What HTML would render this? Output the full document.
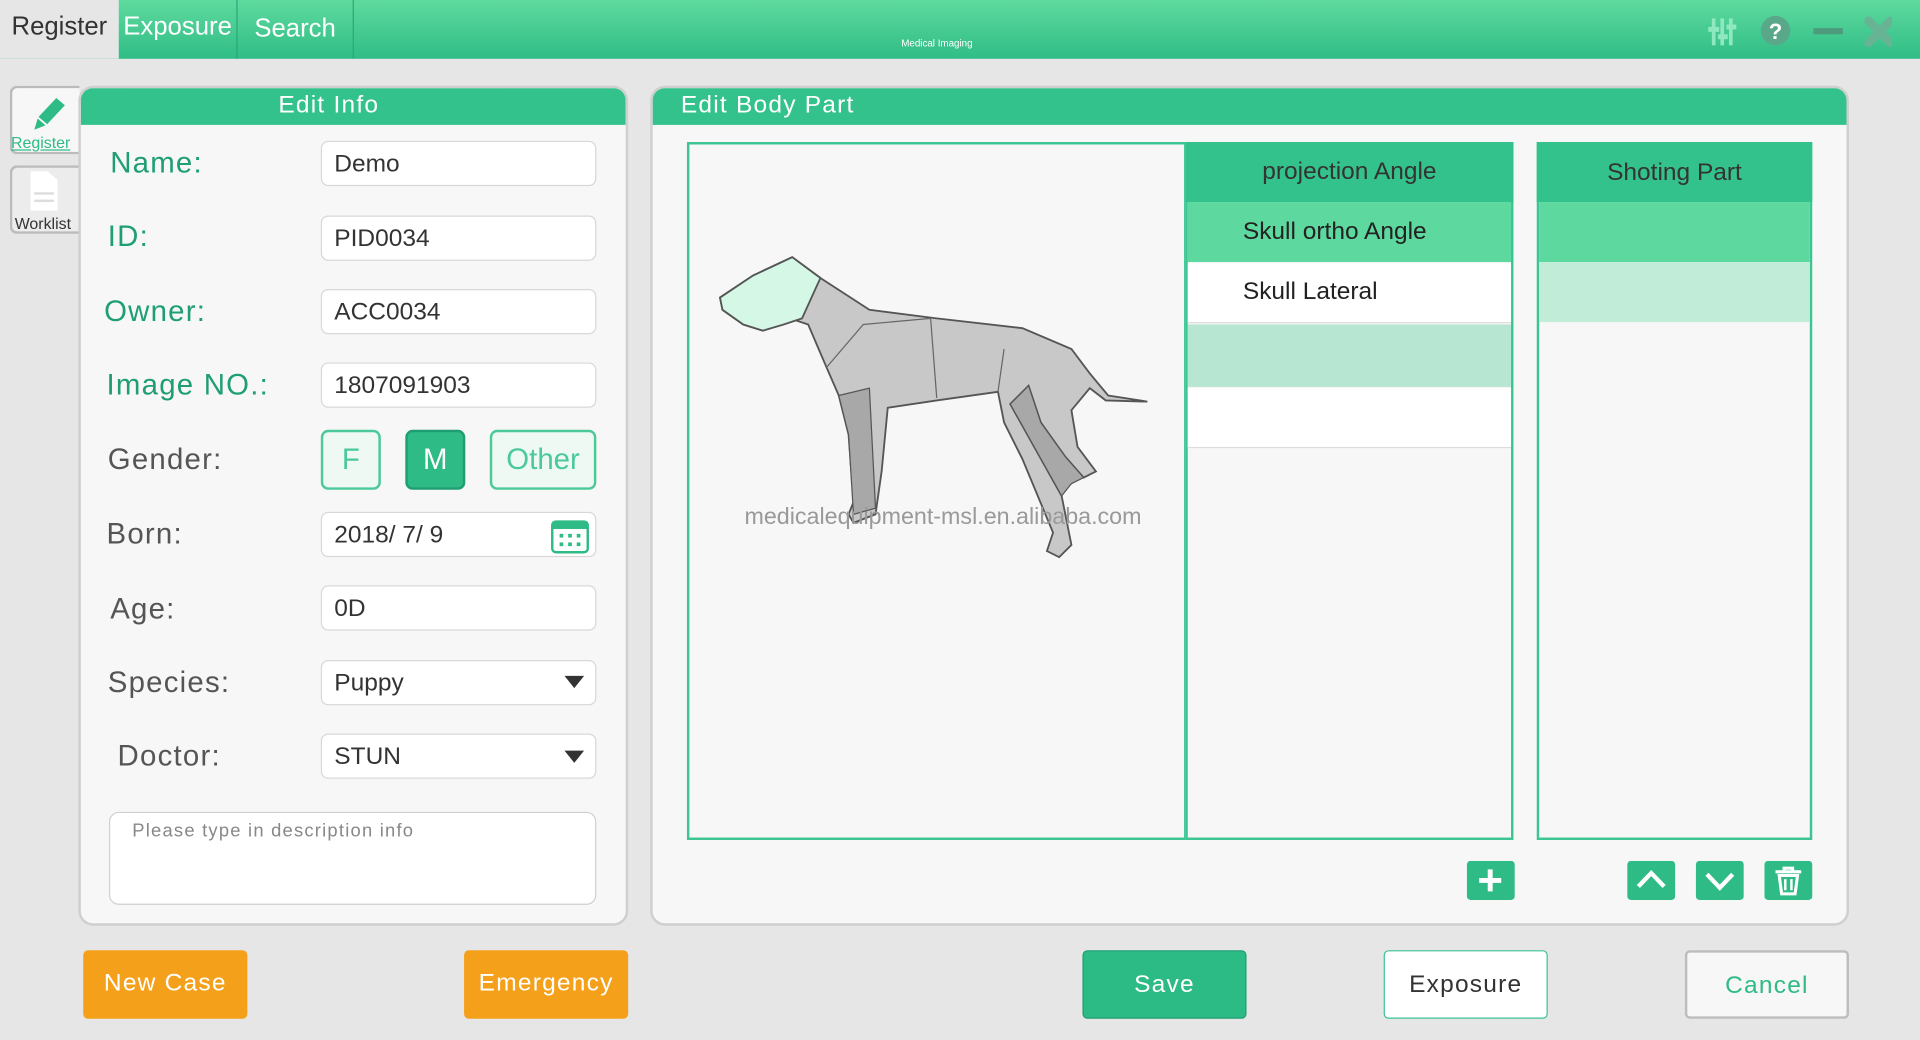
<!DOCTYPE html>
<html><head><meta charset="utf-8"><style>
*{margin:0;padding:0;box-sizing:border-box}
html,body{width:1920px;height:1040px;overflow:hidden;background:#e6e6e6}
#w{position:absolute;left:0;top:0;width:1568px;height:849px;transform:scale(1.22449);transform-origin:0 0;font-family:"Liberation Sans",sans-serif;background:#e6e6e6}
.a{position:absolute}
.top{left:0;top:0;width:1568px;height:48px;background:linear-gradient(#5fda9e,#2fbd86)}
.tab{top:0;height:48px;font-size:21px;color:#fff;padding-top:12px;text-align:center}
.panel{background:#f7f7f7;border:2px solid #cfcfcf;border-radius:12px;overflow:hidden}
.ph{position:absolute;left:0;top:0;right:0;height:30px;background:#34c28c;color:#fff;font-size:20px;padding-top:3px}
.lab{font-size:24px;letter-spacing:1px}
.g{color:#1f9e73}.k{color:#555}
.in{left:262px;width:225px;height:37px;background:#fff;border:1px solid #d8d8d8;border-radius:6px;font-size:20px;color:#333;padding:7px 10px}
.btn{height:56px;border-radius:4px;font-size:20px;text-align:center;line-height:54px;letter-spacing:1px}
</style></head><body><div id="w">
<div class="a top"></div>
<div class="a" style="left:0;top:0;width:97px;height:48px;background:#e6e6e6"></div>
<div class="a tab" style="left:0;width:97px;color:#333;padding-top:10px">Register</div>
<div class="a tab" style="left:97px;width:97px;border-right:1px solid #2aa877;padding-top:10px">Exposure</div>
<div class="a tab" style="left:194px;width:95px;border-right:1px solid #2aa877">Search</div>
<div class="a" style="left:736px;top:31px;font-size:8px;color:#fff">Medical Imaging</div>
<svg class="a" style="left:1395px;top:12px" width="150" height="30">
<g fill="#8fe8c0"><rect x="3" y="3" width="3" height="22"/><rect x="10" y="3" width="3" height="22"/><rect x="17" y="3" width="3" height="22"/><rect x="0" y="10" width="9" height="4"/><rect x="8" y="16" width="8" height="4"/><rect x="15" y="8" width="8" height="4"/></g>
<circle cx="55" cy="13" r="12" fill="#5aa88a"/><text x="55" y="20" font-size="18" font-weight="bold" fill="#fff" text-anchor="middle" font-family="Liberation Sans">?</text>
<rect x="86" y="11" width="24" height="5" fill="#4d9a7c"/>
<path d="M131 5 L149 23 M149 5 L131 23" stroke="#67b394" stroke-width="7" stroke-linecap="round"/>
</svg>
<div class="a" style="left:8px;top:70px;width:57px;height:56px;background:#f7f7f7;border:2px solid #bbb;border-right:none;border-radius:6px 0 0 6px"></div>
<svg class="a" style="left:22px;top:76px" width="34" height="34"><path d="M6 30 L9 20 L24 4 L31 10 L16 26 Z" fill="#2fbb85"/><path d="M9 20 L16 26" stroke="#fff" stroke-width="1.5"/></svg>
<div class="a" style="left:9px;top:109px;font-size:13px;color:#2fbb85;text-decoration:underline">Register</div>
<div class="a" style="left:8px;top:135px;width:57px;height:56px;background:#ececec;border:2px solid #bbb;border-right:none;border-radius:6px 0 0 6px"></div>
<svg class="a" style="left:24px;top:139px" width="24" height="34"><path d="M1 1 H15 L23 8 V33 H1 Z" fill="#fff"/><rect x="4" y="18" width="16" height="2" fill="#ddd"/><rect x="4" y="24" width="16" height="2" fill="#ddd"/></svg>
<div class="a" style="left:12px;top:175px;font-size:13px;color:#333">Worklist</div>
<div class="a panel" style="left:64px;top:70px;width:449px;height:686px"><div class="ph" style="text-align:center;padding-right:40px;letter-spacing:1px">Edit Info</div></div>
<div class="a lab g" style="left:90px;top:120px">Name:</div>
<div class="a lab g" style="left:88px;top:180px">ID:</div>
<div class="a lab g" style="left:85px;top:241px">Owner:</div>
<div class="a lab g" style="left:87px;top:301px">Image NO.:</div>
<div class="a lab k" style="left:88px;top:362px">Gender:</div>
<div class="a lab k" style="left:87px;top:423px">Born:</div>
<div class="a lab k" style="left:90px;top:484px">Age:</div>
<div class="a lab k" style="left:88px;top:544px">Species:</div>
<div class="a lab k" style="left:96px;top:604px">Doctor:</div>
<div class="a in" style="top:115px">Demo</div>
<div class="a in" style="top:176px">PID0034</div>
<div class="a in" style="top:236px">ACC0034</div>
<div class="a in" style="top:296px">1807091903</div>
<div class="a" style="left:262px;top:351px;width:49px;height:49px;border:2px solid #4cc99a;border-radius:6px;background:#eef9f4;color:#4cc99a;font-size:24px;text-align:center;line-height:45px">F</div>
<div class="a" style="left:331px;top:351px;width:49px;height:49px;border:2px solid #1f9e73;border-radius:6px;background:#2fbb85;color:#fff;font-size:24px;text-align:center;line-height:45px">M</div>
<div class="a" style="left:400px;top:351px;width:87px;height:49px;border:2px solid #4cc99a;border-radius:6px;background:#eef9f4;color:#4cc99a;font-size:24px;text-align:center;line-height:45px">Other</div>
<div class="a in" style="top:418px">2018/ 7/ 9</div>
<svg class="a" style="left:449px;top:421px" width="34" height="32"><rect x="2" y="5" width="29" height="25" rx="3" fill="none" stroke="#2fbb85" stroke-width="2"/><rect x="2" y="5" width="29" height="6" fill="#2fbb85"/><g fill="#2fbb85"><rect x="8" y="15" width="3" height="3"/><rect x="15" y="15" width="3" height="3"/><rect x="22" y="15" width="3" height="3"/><rect x="8" y="22" width="3" height="3"/><rect x="15" y="22" width="3" height="3"/><rect x="22" y="22" width="3" height="3"/></g></svg>
<div class="a in" style="top:478px">0D</div>
<div class="a in" style="top:539px">Puppy</div>
<div class="a in" style="top:599px">STUN</div>
<svg class="a" style="left:460px;top:551px" width="18" height="12"><path d="M1 1 H17 L9 11Z" fill="#333"/></svg>
<svg class="a" style="left:460px;top:612px" width="18" height="12"><path d="M1 1 H17 L9 11Z" fill="#333"/></svg>
<div class="a" style="left:89px;top:663px;width:398px;height:76px;background:#fff;border:1px solid #d0d0d0;border-radius:8px;font-size:15px;color:#888;padding:6px 18px;letter-spacing:1px">Please type in description info</div>
<div class="a panel" style="left:531px;top:70px;width:979px;height:686px"><div class="ph" style="padding-left:23px;letter-spacing:1px">Edit Body Part</div></div>
<div class="a" style="left:561px;top:116px;width:408px;height:570px;border:2px solid #3cc493;background:#f7f7f7"></div>
<svg class="a" style="left:585px;top:205px" width="360" height="255">
<path d="M3 38 L30 20 L62 5 L85 22 L125 48 L180 55 L250 63 L290 80 L305 100 L320 118 L352 123 L318 122 L305 112 L290 130 L295 160 L310 180 L300 185 L285 168 L265 140 L255 110 L240 125 L282 200 L290 240 L280 250 L270 245 L275 230 L250 170 L235 140 L230 115 L180 122 L140 128 L135 180 L130 215 L112 222 L108 215 L112 205 L108 150 L100 118 L90 95 L75 60 L60 55 L38 65 L22 60 L5 48 Z" fill="#c8c8c8" stroke="#555" stroke-width="1.5"/>
<path d="M3 38 L30 20 L62 5 L85 22 L70 55 L55 60 L38 65 L22 60 L5 48 Z" fill="#d4f7e6" stroke="#555" stroke-width="1.5"/>
<path d="M100 118 L125 112 L130 210 L112 215 L108 150 Z" fill="#a8a8a8" stroke="#555"/>
<path d="M240 125 L255 110 L265 140 L285 168 L300 185 L290 190 L282 200 Z" fill="#a8a8a8" stroke="#555"/>
<path d="M90 95 L120 60 L175 55 M175 55 L180 120 M235 80 L230 115" stroke="#666" fill="none"/>
</svg>
<div class="a" style="left:608px;top:412px;font-size:19px;color:#999">medicalequipment-msl.en.alibaba.com</div>
<div class="a" style="left:968px;top:116px;width:268px;height:570px;border:2px solid #3cc493;background:#f7f7f7"></div>
<div class="a" style="left:968px;top:116px;width:268px;height:49px;background:#34c28c;color:#333;font-size:20px;text-align:center;line-height:49px">projection Angle</div>
<div class="a" style="left:970px;top:165px;width:264px;height:49px;background:#5dd9a0;color:#222;font-size:20px;line-height:49px;padding-left:45px">Skull ortho Angle</div>
<div class="a" style="left:970px;top:215px;width:264px;height:49px;background:#fff;color:#222;font-size:20px;line-height:47px;padding-left:45px;border-bottom:1px solid #ddd">Skull Lateral</div>
<div class="a" style="left:970px;top:265px;width:264px;height:51px;background:#b7e6d2"></div>
<div class="a" style="left:970px;top:317px;width:264px;height:49px;background:#fff;border-bottom:1px solid #ddd"></div>
<div class="a" style="left:1255px;top:116px;width:225px;height:570px;border:2px solid #3cc493;background:#f7f7f7"></div>
<div class="a" style="left:1255px;top:116px;width:225px;height:49px;background:#34c28c;color:#333;font-size:20px;text-align:center;line-height:51px">Shoting Part</div>
<div class="a" style="left:1257px;top:165px;width:221px;height:49px;background:#5dd9a0"></div>
<div class="a" style="left:1257px;top:214px;width:221px;height:49px;background:#c0ecd8"></div>
<svg class="a" style="left:1197px;top:703px" width="284" height="33">
<rect x="1" width="39" height="32" rx="3" fill="#2fbb85"/><path d="M20 7 V25 M11 16 H29" stroke="#fff" stroke-width="4"/>
<rect x="132" width="39" height="32" rx="3" fill="#2fbb85"/><path d="M141 21 L151.5 10 L162 21" stroke="#fff" stroke-width="3.5" fill="none"/>
<rect x="188" width="39" height="32" rx="3" fill="#2fbb85"/><path d="M197 11 L207.5 22 L218 11" stroke="#fff" stroke-width="3.5" fill="none"/>
<rect x="244" width="39" height="32" rx="3" fill="#2fbb85"/><path d="M253 9 H274 M260 9 V6 H267 V9 M256 12 H271 L269 27 H258 Z" stroke="#fff" stroke-width="2.5" fill="none"/><path d="M261 15 V24 M266 15 V24" stroke="#fff" stroke-width="2"/>
</svg>
<div class="a btn" style="left:68px;top:776px;width:134px;background:#f5a01a;color:#fff">New Case</div>
<div class="a btn" style="left:379px;top:776px;width:134px;background:#f5a01a;color:#fff">Emergency</div>
<div class="a btn" style="left:884px;top:776px;width:134px;background:#2dbb85;color:#fff;border:1px solid #1f9e73">Save</div>
<div class="a btn" style="left:1130px;top:776px;width:134px;background:#fff;color:#333;border:1px solid #3cc493">Exposure</div>
<div class="a btn" style="left:1376px;top:776px;width:134px;background:#f7f7f7;color:#2fbb85;border:2px solid #bdbdbd">Cancel</div>
</div></body></html>
